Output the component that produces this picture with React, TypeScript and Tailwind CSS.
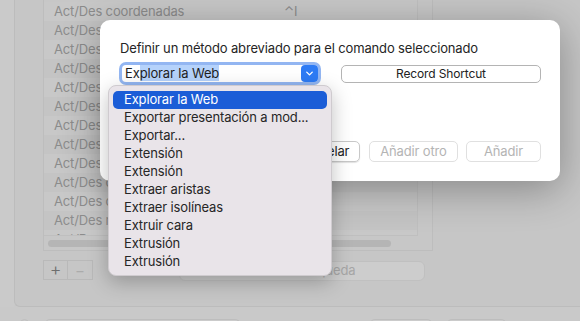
import { ChevronDown } from 'lucide-react'

const rows = [
  { name: 'Act/Des coordenadas', key: '⌃I' },
  { name: 'Act/Des capas', key: '' },
  { name: 'Act/Des consola', key: '' },
  { name: 'Act/Des cuadrícula', key: '' },
  { name: 'Act/Des ejes', key: '' },
  { name: 'Act/Des ortogonal', key: '' },
  { name: 'Act/Des planitud', key: '' },
  { name: 'Act/Des propiedades', key: '' },
  { name: 'Act/Des paneles', key: '' },
  { name: 'Act/Des cotas', key: '' },
  { name: 'Act/Des cursor', key: '' },
  { name: 'Act/Des referencia', key: '' },
  { name: 'Act/Des vistas', key: '' },
]

const menuItems = [
  'Explorar la Web',
  'Exportar presentación a mod...',
  'Exportar...',
  'Extensión',
  'Extensión',
  'Extraer aristas',
  'Extraer isolíneas',
  'Extruir cara',
  'Extrusión',
  'Extrusión',
]

export default function App() {
  return (
    <div className="relative w-[580px] h-[321px] overflow-hidden bg-[#c9c9c9] font-['Inter','Noto_Sans',sans-serif] text-[13px] tracking-[-0.15px]">
      {/* dimmed window behind the sheet */}
      <div className="flex h-[307px]">
        <div className="w-[14px] bg-[#cacaca]" />
        <div className="flex-1 flex flex-col pl-[28px] border-l border-b border-[#bcbcbc] rounded-bl-[6px] bg-[#c6c6c6]">
          <div className="w-[390px] h-[251px] flex flex-col border border-t-0 border-[#bdbdbd] bg-[#c7c7c7]">
            <div className="flex h-[236px]">
              <div className="w-[374px] h-full overflow-hidden border-r border-b border-[#bfbfbf] pt-[2px]">
                {rows.map((r, i) => (
                  <div
                    key={i}
                    className={`flex items-center h-[19px] pl-[10px] text-[#8c8c8c] ${i % 2 === 0 ? 'bg-[#c8c8c8]' : 'bg-[#c4c4c4]'}`}
                  >
                    <span className="w-[230px]">{r.name}</span>
                    <span>{r.key}</span>
                  </div>
                ))}
              </div>
            </div>
            <div className="px-[4px] pt-[4px]">
              <div className="w-[343px] h-[7px] rounded-full bg-[#b5b5b5]" />
            </div>
          </div>
          <div className="flex items-start mt-[9px]">
            <div className="flex h-[20px] border border-[#b9b9b9]">
              <div className="w-[24px] flex items-center justify-center border-r border-[#b9b9b9] text-[#6e6e6e] text-[18px] font-light leading-none">+</div>
              <div className="w-[24px] flex items-center justify-center text-[#ababab] text-[15px] leading-none">−</div>
            </div>
            <div className="ml-[86px] mt-[1px] w-[246px] h-[20px] rounded-[6px] border border-[#c0c0c0] bg-[#cdcdcd] pl-[115px] flex items-center text-[#a6a6a6]">
              Búsqueda
            </div>
          </div>
        </div>
      </div>
      <div className="flex items-start pt-[12px] h-[14px]">
        <div className="ml-[20px] w-[9px] h-[9px] rounded-full border border-[#bdbdbd]" />
        <div className="ml-[16px] w-[195px] h-[8px] rounded-t-[5px] border border-b-0 border-[#bdbdbd] bg-[#cbcbcb]" />
        <div className="ml-[130px] w-[62px] h-[8px] rounded-t-[5px] border border-b-0 border-[#bdbdbd] bg-[#cbcbcb]" />
        <div className="ml-[15px] w-[59px] h-[8px] rounded-t-[5px] border border-b-0 border-[#bdbdbd] bg-[#cbcbcb]" />
      </div>

      {/* sheet */}
      <div className="absolute left-[100px] top-[20px] w-[460px] h-[161px] rounded-[10px] bg-white shadow-[0_8px_40px_rgba(0,0,0,0.32)] flex flex-col px-[19px] pt-[20px] pb-[19px]">
        <div className="pl-[1px] leading-4 text-[#252525]">Definir un método abreviado para el comando seleccionado</div>
        <div className="flex items-center mt-[6px] h-[23px]">
          <div className="w-[202px] h-[23px] rounded-[7px] bg-[#93b6f2] p-[3px]">
            <div className="h-full rounded-[4px] bg-white flex items-center pl-[3px] pr-[0px]">
              <span className="text-[#1f1f1f] leading-[15px]">
                Ex<span className="bg-[#b5d2fb]">plorar la Web</span>
              </span>
              <div className="ml-auto w-[17px] h-[17px] rounded-[4px] bg-[#2d7bf5] flex items-center justify-center">
                <ChevronDown className="w-[11px] h-[11px] text-white" strokeWidth={3} />
              </div>
            </div>
          </div>
          <div className="ml-[20px] w-[200px] h-[18px] rounded-[5px] border border-[#b4b4b4] flex items-center justify-center text-[12px] text-[#222]">
            Record Shortcut
          </div>
        </div>
        <div className="mt-auto flex justify-end gap-[8px] h-[21px]">
          <div className="w-[75px] rounded-[5px] border border-[#c8c8c8] shadow-[0_1px_1px_rgba(0,0,0,0.12)] flex items-center justify-center text-[#222]">Cancelar</div>
          <div className="w-[89px] ml-[1px] rounded-[5px] border border-[#e0e0e0] flex items-center justify-center text-[#b4b4b4]">Añadir otro</div>
          <div className="w-[75px] rounded-[5px] border border-[#e0e0e0] flex items-center justify-center text-[#b4b4b4]">Añadir</div>
        </div>
      </div>

      {/* popup menu */}
      <div className="absolute left-[108px] top-[85px] w-[224px] h-[191px] rounded-[8px] bg-[#e9e4e9] border border-[#cfcbcf] shadow-[0_6px_20px_rgba(0,0,0,0.25)] px-[4px] pt-[5px]">
        {menuItems.map((m, i) => (
          <div
            key={i}
            className={`h-[18px] flex items-center pl-[11px] rounded-[5px] whitespace-nowrap ${i === 0 ? 'bg-[#1b5dd7] text-white' : 'text-[#262626]'}`}
          >
            {m}
          </div>
        ))}
      </div>
    </div>
  )
}
